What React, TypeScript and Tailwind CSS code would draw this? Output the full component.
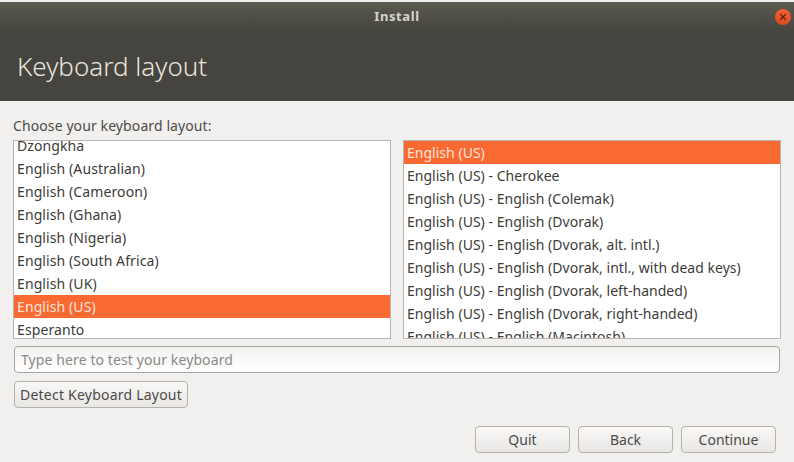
const leftRows = [
  'Dzongkha',
  'English (Australian)',
  'English (Cameroon)',
  'English (Ghana)',
  'English (Nigeria)',
  'English (South Africa)',
  'English (UK)',
  'English (US)',
  'Esperanto',
]

const rightRows = [
  'English (US)',
  'English (US) - Cherokee',
  'English (US) - English (Colemak)',
  'English (US) - English (Dvorak)',
  'English (US) - English (Dvorak, alt. intl.)',
  'English (US) - English (Dvorak, intl., with dead keys)',
  'English (US) - English (Dvorak, left-handed)',
  'English (US) - English (Dvorak, right-handed)',
  'English (US) - English (Macintosh)',
]

function LayoutList({ rows, listClass }: { rows: string[]; listClass: string }) {
  return (
    <div className="h-[199px] w-[378px] overflow-hidden border border-[#b8b5b0] bg-white">
      <div className={listClass}>
        {rows.map((row) => (
          <div
            key={row}
            className={
              row === 'English (US)'
                ? 'h-[23px] bg-[#f96a32] pl-[3px] text-[14px] leading-[23px] text-[#fbe3d8]'
                : 'h-[23px] pl-[3px] text-[14px] leading-[23px] text-[#3d3c38]'
            }
          >
            {row}
          </div>
        ))}
      </div>
    </div>
  )
}

function FooterButton({ label }: { label: string }) {
  return (
    <button className="h-[27px] w-[95px] rounded-[4px] border border-[#b5b2ad] bg-gradient-to-b from-[#f9f8f7] to-[#e9e7e5] text-[14px] text-[#4c4b47]">
      {label}
    </button>
  )
}

export default function App() {
  return (
    <div className="flex h-[462px] w-[794px] flex-col overflow-hidden bg-[#f1f0ee] pt-[2px] font-['Noto_Sans',sans-serif]">
      {/* Title bar */}
      <div className="relative flex h-[30px] shrink-0 items-center justify-center bg-gradient-to-b from-[#5b5a4f] to-[#45443e] text-[13px] font-bold tracking-[0.6px] text-[#d6d3cc]">
        Install
        <div className="absolute right-[3px] top-[7px] flex h-[16px] w-[16px] items-center justify-center rounded-full bg-gradient-to-b from-[#f0602f] to-[#dd4a22]">
          <svg width="8" height="8" viewBox="0 0 8 8" fill="none" stroke="#5c2413" strokeWidth="1.2">
            <path d="M1 1l6 6M7 1L1 7" />
          </svg>
        </div>
      </div>

      {/* Header */}
      <div className="flex h-[69px] shrink-0 items-center bg-[#45443e] pl-[17px] pb-[1px] text-[26px] font-light text-[#e8e5df]">
        Keyboard layout
      </div>

      <div className="flex flex-1 flex-col pl-[13px] pr-[13px]">
        <div className="mt-[16px] h-[23px] text-[14px] leading-[18px] tracking-[0.1px] text-[#4c4b47]">Choose your keyboard layout:</div>

        <div className="flex justify-between">
          <LayoutList rows={leftRows} listClass="-mt-[7px] tracking-[0.1px]" />
          <LayoutList rows={rightRows} listClass="tracking-[0.02px]" />
        </div>

        {/* Test input */}
        <div className="ml-[1px] mt-[7px] flex h-[27px] w-[766px] items-center rounded-[4px] border border-[#a9a6a1] bg-gradient-to-b from-[#f3f2f1] to-white pl-[6px] text-[14px] tracking-[0.1px] text-[#8b8a86]">
          Type here to test your keyboard
        </div>

        <button className="ml-[1px] mt-[8px] h-[27px] w-[174px] rounded-[4px] border border-[#b5b2ad] bg-gradient-to-b from-[#f9f8f7] to-[#e9e7e5] text-[14px] tracking-[0.22px] text-[#4c4b47]">
          Detect Keyboard Layout
        </button>

        {/* Footer buttons */}
        <div className="mr-[5px] mt-[18px] flex justify-end gap-[8px]">
          <FooterButton label="Quit" />
          <FooterButton label="Back" />
          <FooterButton label="Continue" />
        </div>
      </div>
    </div>
  )
}
